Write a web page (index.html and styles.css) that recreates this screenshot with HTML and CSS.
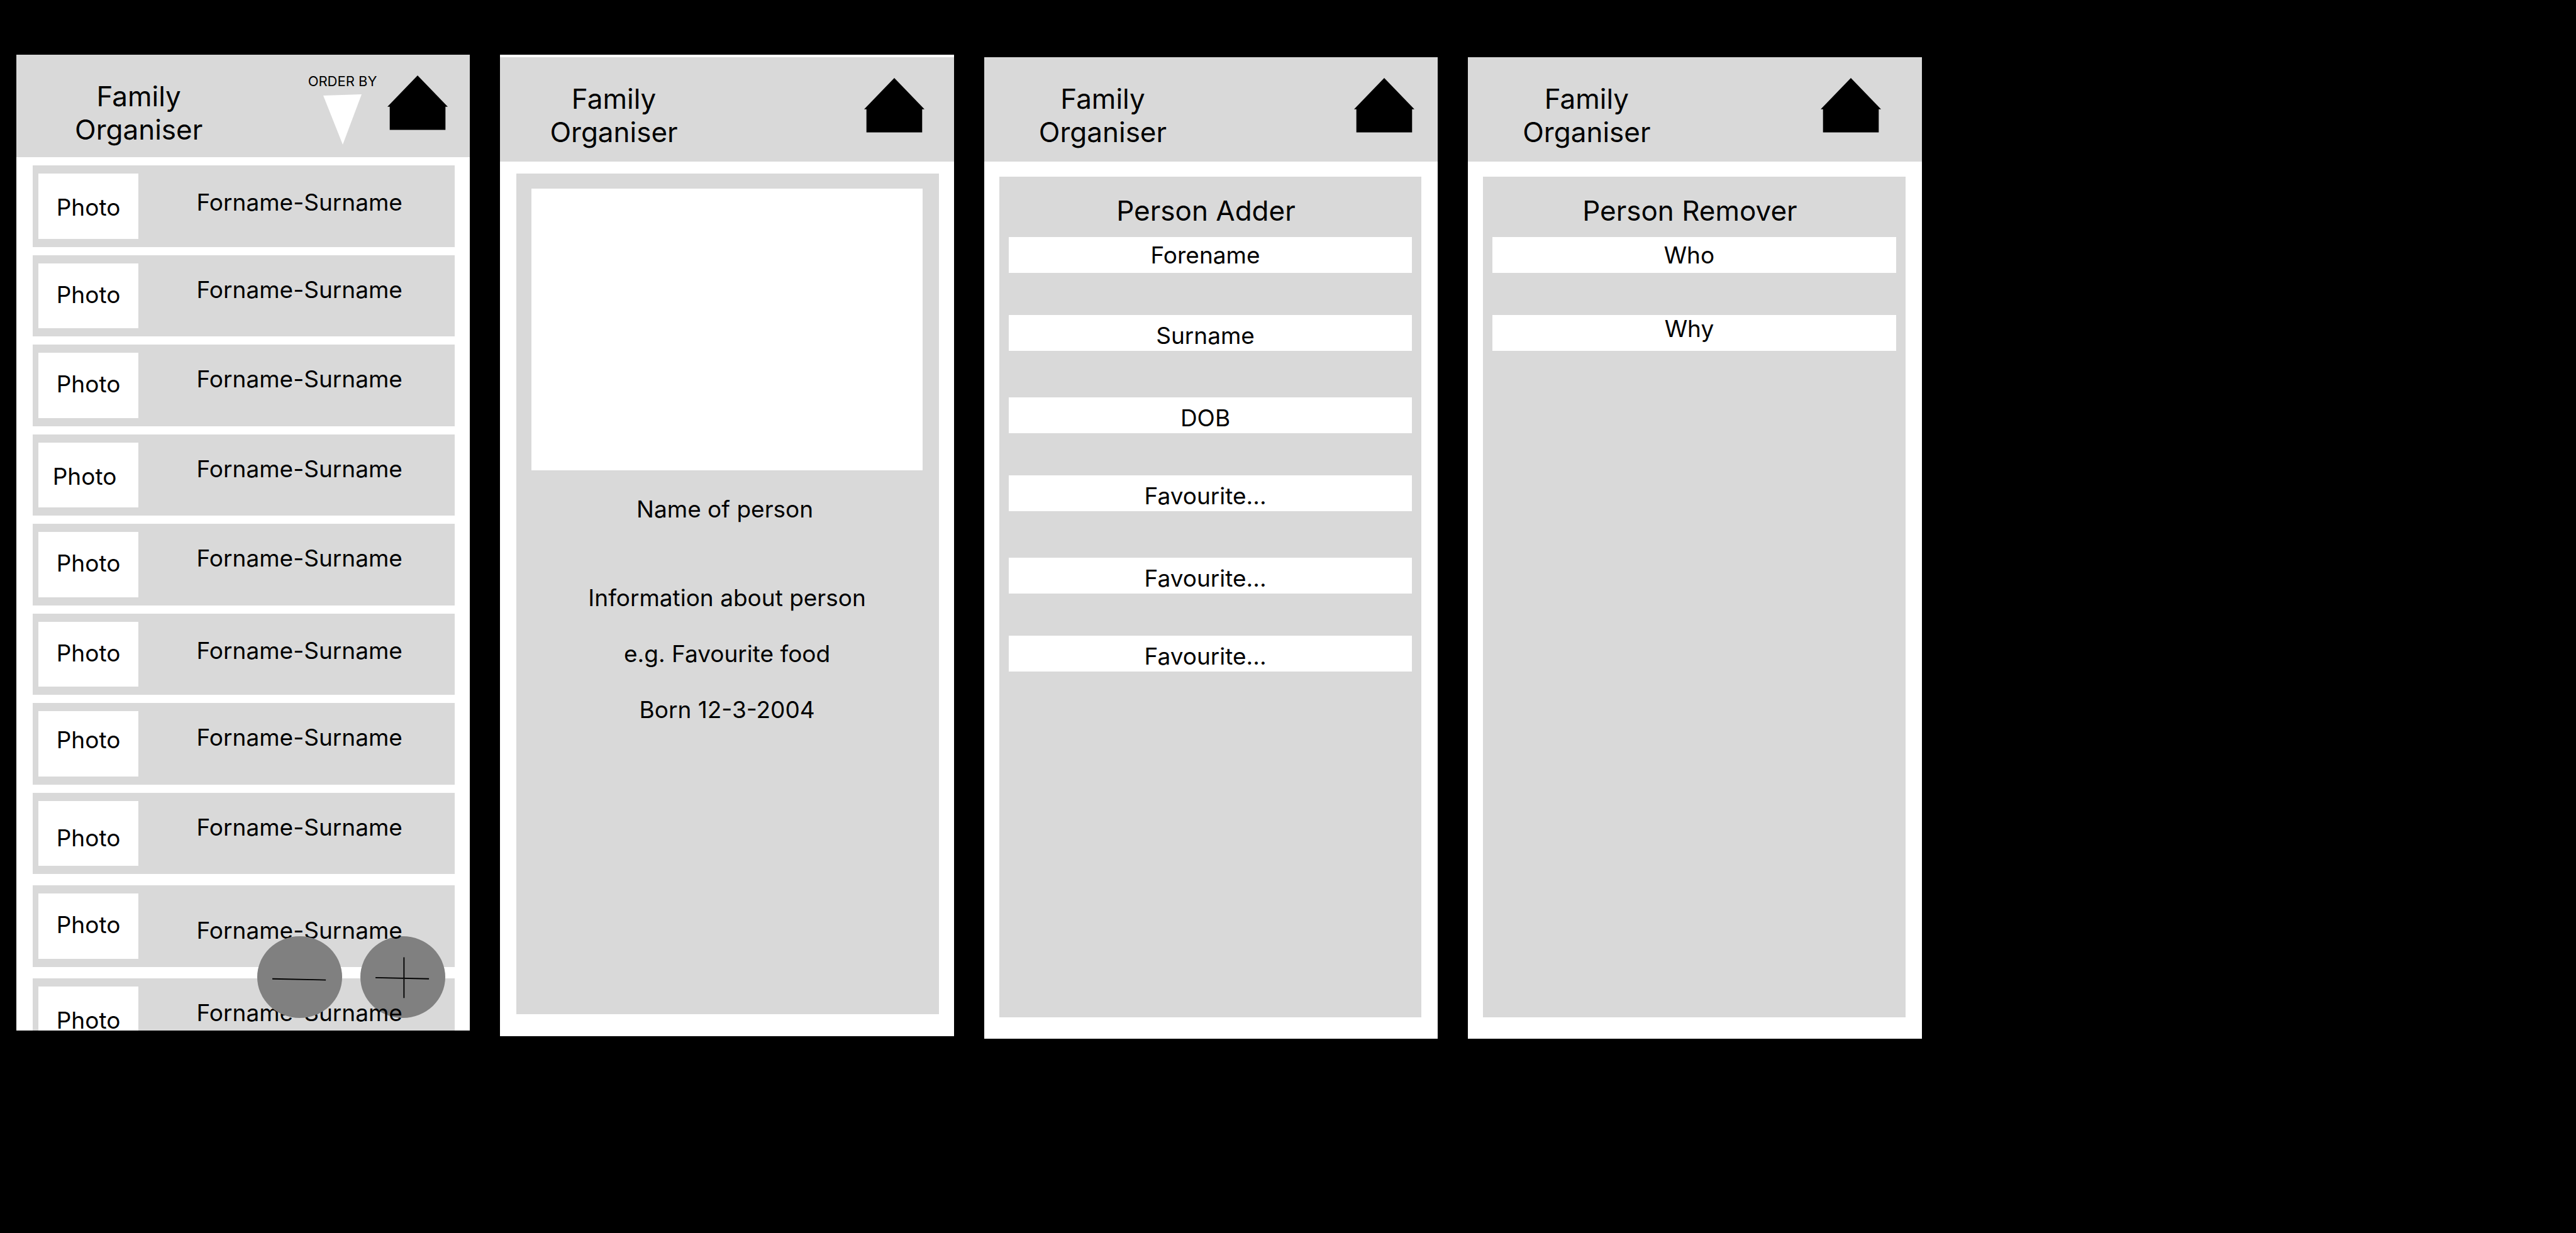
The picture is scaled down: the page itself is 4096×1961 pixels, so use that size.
FILE: index.html
```html
<!DOCTYPE html>
<html lang="en">
<head>
<meta charset="utf-8">
<title>Family Organiser</title>
<link rel="stylesheet" href="styles.css">
</head>
<body>
<svg class="sprite" aria-hidden="true">
  <symbol id="house" viewBox="0 0 104 94">
    <path d="M52 0 L104 54 H100 V94 H4 V54 H0 Z"/>
  </symbol>
</svg>

<main class="board">

  <section class="screen screen--list">
    <header class="bar">
      <h1 class="title">Family<br>Organiser</h1>
      <button class="order" type="button">
        ORDER BY
        <svg class="order-arrow" viewBox="0 0 61 80" aria-hidden="true"><path d="M0 2 L61 0 L31 80 Z"/></svg>
      </button>
      <a class="home" href="#" aria-label="Home"><svg viewBox="0 0 104 94"><use href="#house"/></svg></a>
    </header>
    <ul class="people">
      <li class="person"><span class="photo photo--low">Photo</span><span class="name name--low">Forname-Surname</span></li>
      <li class="person"><span class="photo">Photo</span><span class="name">Forname-Surname</span></li>
      <li class="person"><span class="photo">Photo</span><span class="name">Forname-Surname</span></li>
      <li class="person"><span class="photo photo--low photo--left">Photo</span><span class="name">Forname-Surname</span></li>
      <li class="person"><span class="photo">Photo</span><span class="name">Forname-Surname</span></li>
      <li class="person"><span class="photo">Photo</span><span class="name name--low">Forname-Surname</span></li>
      <li class="person"><span class="photo photo--high">Photo</span><span class="name">Forname-Surname</span></li>
      <li class="person"><span class="photo photo--lowest">Photo</span><span class="name">Forname-Surname</span></li>
    </ul>
    <ul class="people people--more">
      <li class="person"><span class="photo">Photo</span><span class="name name--lowest">Forname-Surname</span></li>
      <li class="person"><span class="photo photo--low">Photo</span><span class="name">Forname-Surname</span></li>
    </ul>
    <button class="round round--remove" type="button" aria-label="Remove person">
      <svg viewBox="0 0 146 140" aria-hidden="true"><path d="M26 73 L118 75"/></svg>
    </button>
    <button class="round round--add" type="button" aria-label="Add person">
      <svg viewBox="0 0 146 140" aria-hidden="true"><path d="M26 71 L118 73 M75 36 V106"/></svg>
    </button>
  </section>

  <section class="screen screen--profile">
    <header class="bar">
      <h1 class="title">Family<br>Organiser</h1>
      <a class="home" href="#" aria-label="Home"><svg viewBox="0 0 104 94"><use href="#house"/></svg></a>
    </header>
    <div class="panel">
      <div class="portrait"></div>
      <h2 class="profile-name">Name of person</h2>
      <div class="facts">
        <p>Information about person</p>
        <p>e.g. Favourite food</p>
        <p>Born 12-3-2004</p>
      </div>
    </div>
  </section>

  <section class="screen screen--form screen--adder">
    <header class="bar">
      <h1 class="title">Family<br>Organiser</h1>
      <a class="home" href="#" aria-label="Home"><svg viewBox="0 0 104 94"><use href="#house"/></svg></a>
    </header>
    <form class="panel">
      <h2 class="form-title">Person Adder</h2>
      <div class="fields">
        <input class="field" type="text" placeholder="Forename" aria-label="Forename">
        <input class="field field--low" type="text" placeholder="Surname" aria-label="Surname">
        <input class="field field--low" type="text" placeholder="DOB" aria-label="DOB">
        <input class="field field--low" type="text" placeholder="Favourite..." aria-label="First favourite">
        <input class="field field--low" type="text" placeholder="Favourite..." aria-label="Second favourite">
        <input class="field field--low" type="text" placeholder="Favourite..." aria-label="Third favourite">
      </div>
    </form>
  </section>

  <section class="screen screen--form screen--remover">
    <header class="bar">
      <h1 class="title">Family<br>Organiser</h1>
      <a class="home" href="#" aria-label="Home"><svg viewBox="0 0 104 94"><use href="#house"/></svg></a>
    </header>
    <form class="panel">
      <h2 class="form-title">Person Remover</h2>
      <div class="fields">
        <input class="field" type="text" placeholder="Who" aria-label="Who">
        <input class="field field--high" type="text" placeholder="Why" aria-label="Why">
      </div>
    </form>
  </section>

</main>
</body>
</html>
```

FILE: styles.css
```css
* {
  box-sizing: border-box;
}

body {
  margin: 0;
  background: #000;
  color: #000;
  font-family: Inter, "Liberation Sans", sans-serif;
  font-size: 37px;
  line-height: 45px;
}

h1,
h2,
p,
ul {
  margin: 0;
  padding: 0;
  font-size: inherit;
  font-weight: 400;
}

.sprite {
  display: none;
}

.board {
  display: grid;
  grid-template-columns: repeat(4, minmax(0, 1fr));
  align-items: start;
  gap: 48px;
  padding: 87px 25.4% 0 26px;
}

.screen {
  position: relative;
  isolation: isolate;
  background: #fff;
}

/* Header bar */

.bar {
  display: flex;
  align-items: flex-start;
  height: 166px;
  background: #d9d9d9;
}

.title {
  margin-left: 87px;
  padding-top: 40px;
  font-size: 44px;
  line-height: 53px;
  text-align: center;
}

.home {
  width: 96px;
  margin: 33px 37px 0 auto;
}

.home svg {
  display: block;
  width: 100%;
}

.order {
  display: flex;
  flex-direction: column;
  align-items: center;
  gap: 7px;
  margin-left: auto;
  padding: 28px 0 0;
  border: 0;
  background: none;
  color: inherit;
  font: inherit;
  font-size: 22px;
  line-height: 28px;
}

.order-arrow {
  width: 61px;
  height: 80px;
  fill: #fff;
}

/* List of people */

.screen--list {
  height: 1552px;
  overflow: hidden;
}

.screen--list .bar {
  height: 163px;
}

.screen--list .title {
  margin-left: 93px;
}

.screen--list .home {
  margin-left: 17px;
  margin-right: 35px;
}

.people {
  display: grid;
  grid-auto-rows: 1fr;
  gap: 13px;
  height: 1127px;
  margin: 13px 24px 0 26px;
  list-style: none;
}

.people--more {
  grid-auto-rows: 130px;
  gap: 18px;
  height: auto;
  margin-top: 18px;
}

.person {
  display: flex;
  gap: 9px;
  padding-left: 9px;
  background: #d9d9d9;
}

.photo {
  width: 159px;
  margin: 13px 0;
  padding-top: 27px;
  background: #fff;
  text-align: center;
}

.photo--high {
  padding-top: 23px;
}

.photo--low {
  padding-top: 31px;
}

.photo--lowest {
  padding-top: 36px;
}

.photo--left {
  padding-right: 12px;
}

.name {
  position: relative;
  z-index: 2;
  flex: 1;
  padding-top: 32px;
  text-align: center;
}

.name--low {
  padding-top: 36px;
}

.name--lowest {
  padding-top: 49px;
}

/* Floating buttons: names run over the add button and under the remove one */

.round {
  position: absolute;
  bottom: 20px;
  width: 135px;
  height: 130px;
  padding: 0;
  border: 0;
  border-radius: 50%;
  background: #808080;
}

.round svg {
  display: block;
  width: 100%;
  height: 100%;
  stroke: #000;
  stroke-width: 2;
}

.round--add {
  z-index: 1;
  right: 39px;
}

.round--remove {
  z-index: 3;
  right: 203px;
}

/* Profile */

.screen--profile {
  padding: 4px 0 35px;
}

.screen--profile .title {
  margin-left: 79px;
}

.screen--profile .home {
  margin-right: 47px;
}

.panel {
  min-height: 1337px;
  background: #d9d9d9;
  text-align: center;
}

.screen--profile .panel {
  margin: 19px 24px 0 26px;
  padding: 24px 0 0;
}

.portrait {
  height: 448px;
  margin: 0 26px 0 24px;
  background: #fff;
}

.profile-name {
  margin-top: 39px;
  padding-right: 9px;
}

.facts {
  display: flex;
  flex-direction: column;
  gap: 44px;
  margin-top: 96px;
  padding-right: 2px;
}

/* Forms */

.screen--form {
  margin-top: 4px;
  padding-bottom: 34px;
}

.screen--remover .home {
  margin-right: 65px;
}

.screen--form .panel {
  margin: 24px 26px 0 24px;
  padding: 27px 15px 0;
}

.form-title {
  padding-right: 14px;
  font-size: 44px;
  line-height: 54px;
}

.fields {
  display: flex;
  flex-direction: column;
  margin-top: 15px;
}

.field {
  width: 100%;
  height: 57px;
  margin: 0;
  padding: 0 16px 0 0;
  border: 0;
  background: #fff;
  color: inherit;
  font: inherit;
  text-align: center;
}

.field::placeholder {
  color: #000;
  opacity: 1;
}

.field:nth-child(even) {
  margin-top: 67px;
}

.field:nth-child(odd):not(:first-child) {
  margin-top: 74px;
}

.field--low {
  padding-top: 8px;
}

.field--high {
  padding-bottom: 14px;
}
```
